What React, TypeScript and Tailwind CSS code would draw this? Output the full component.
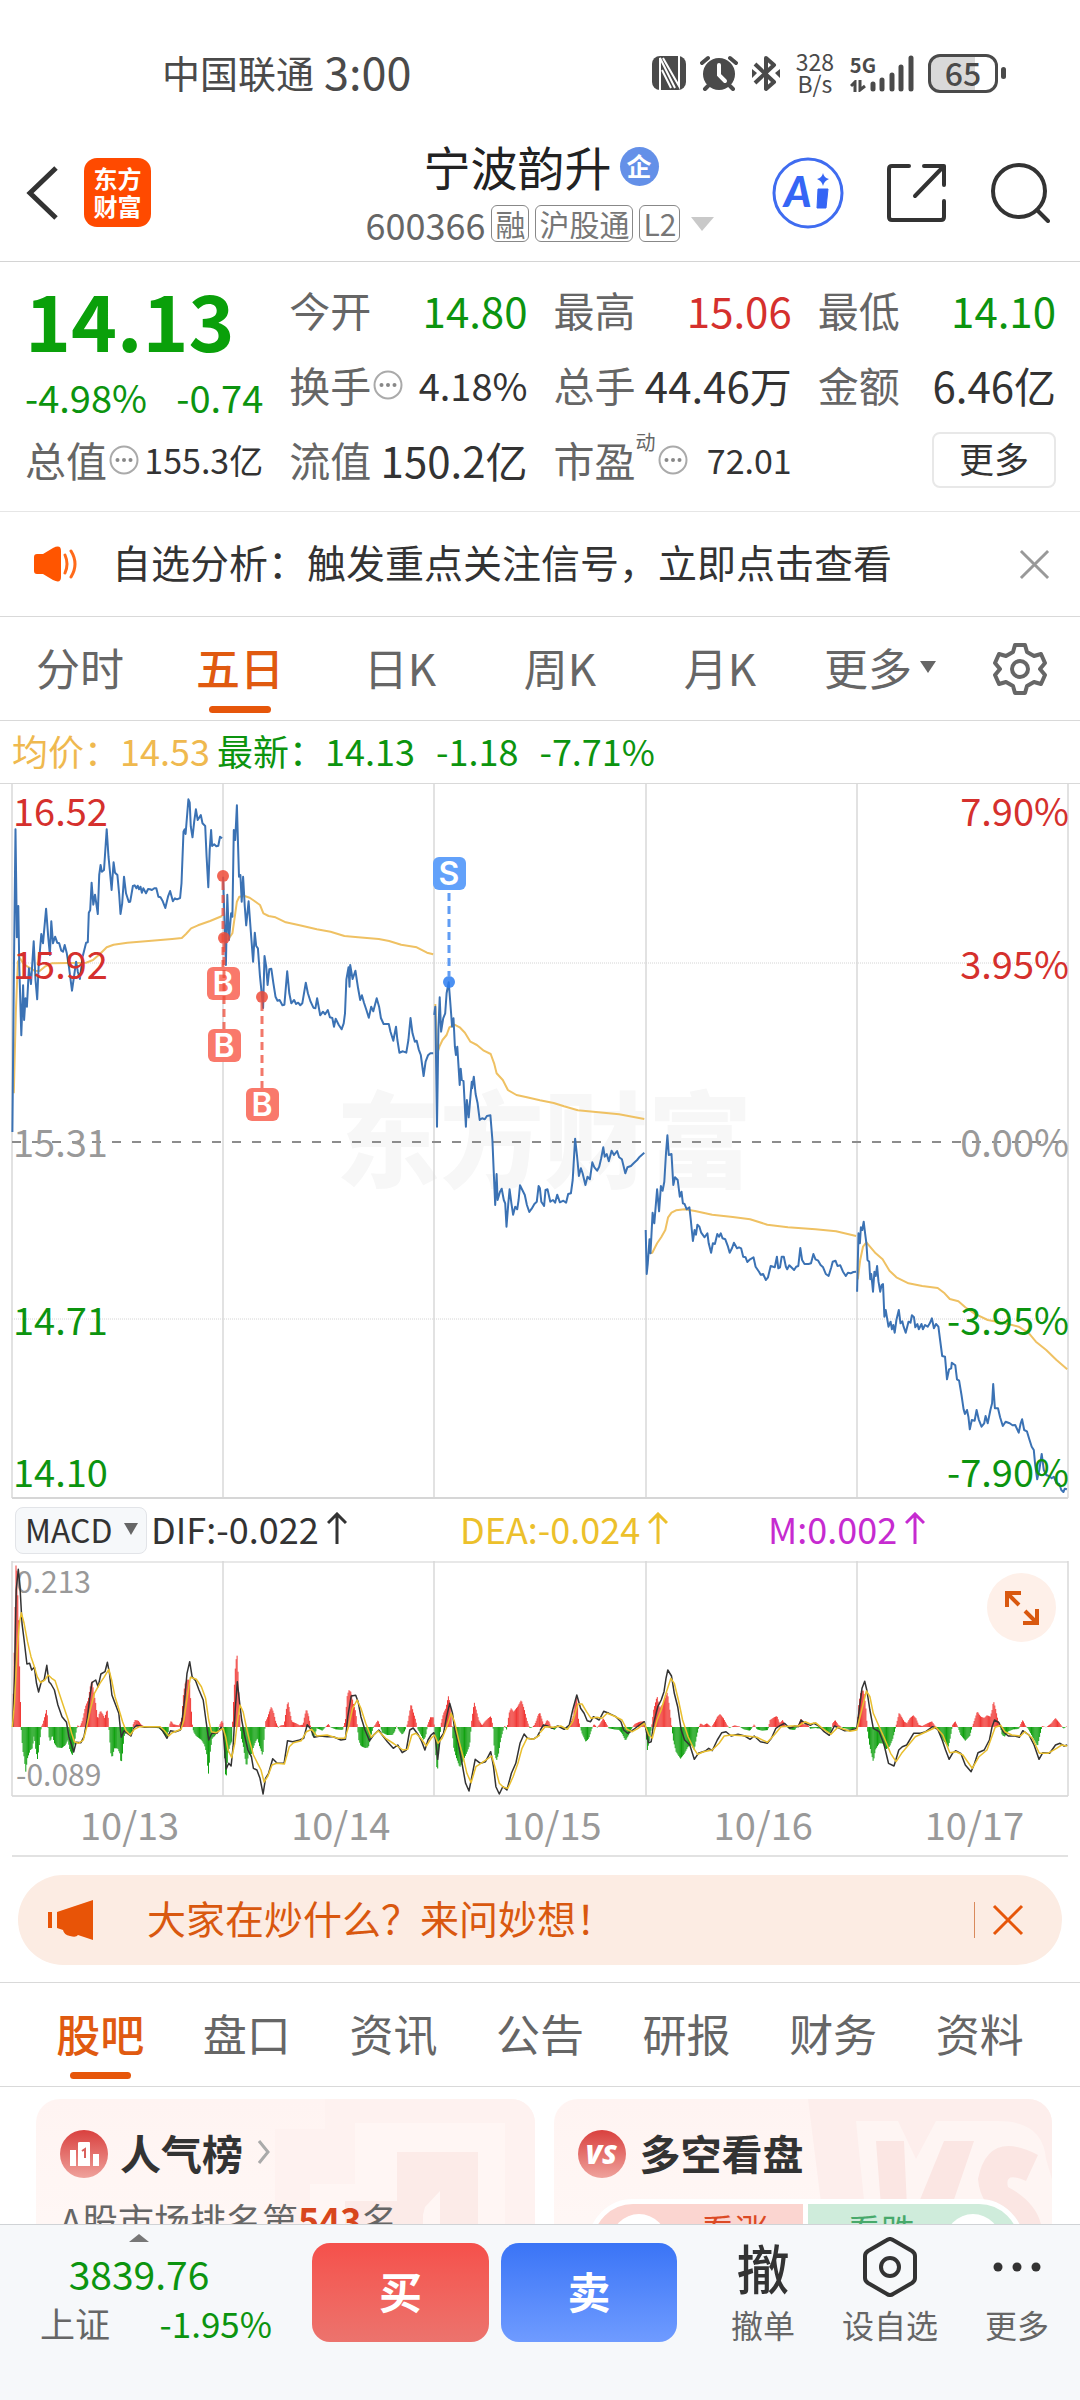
import { useState, type ReactNode } from 'react';

type Tone = 'up' | 'down' | 'flat';

const TONE: Record<Tone, string> = {
  up: 'text-[#d5302d]',
  down: 'text-[#0c940f]',
  flat: 'text-[#333333]',
};

const CHART_TABS = ['分时', '五日', '日K', '周K', '月K'];
const INFO_TABS = ['股吧', '盘口', '资讯', '公告', '研报', '财务', '资料'];
const DATES = ['10/13', '10/14', '10/15', '10/16', '10/17'];

// Series are sampled on a fine grid: flat [x, y, x, y, ...] lists, one per session.
const GX = 2.904;
const GY = 3;

const PRICE_TOP: number[][] = [
  [
    36, 1056, 40, 600, 45, 148, 49, 472, 53, 378, 56, 560, 62, 766, 67, 616, 70, 720, 74, 655, 78, 680, 84, 565, 90, 612, 98, 484,
    103, 600, 108, 658, 112, 560, 120, 462, 125, 490, 134, 386, 140, 470, 145, 525, 149, 424, 154, 490, 160, 470, 166, 488, 172, 490,
    178, 512, 183, 515, 188, 495, 194, 520, 200, 560, 209, 632, 215, 590, 221, 545, 226, 575, 232, 597, 240, 530, 250, 488, 255, 487,
    258, 398, 262, 390, 266, 308, 271, 374, 276, 344, 284, 402, 288, 285, 292, 255, 296, 275, 302, 270, 310, 148, 315, 230, 319, 270,
    324, 330, 330, 247, 334, 278, 341, 285, 346, 340, 350, 402, 355, 370, 360, 290, 366, 340, 374, 366, 378, 365, 386, 318, 391, 316,
    396, 325, 400, 317, 404, 328, 408, 320, 412, 338, 416, 325, 424, 340, 430, 327, 436, 328, 441, 330, 448, 325, 454, 325, 460, 350,
    466, 352, 472, 362, 480, 384, 488, 350, 494, 333, 502, 364, 508, 355, 514, 358, 523, 354, 527, 310, 533, 155, 536, 148, 539, 162,
    547, 58, 551, 68, 554, 140, 559, 172, 564, 125, 569, 88, 574, 120, 583, 105, 588, 130, 596, 138, 600, 230, 605, 322, 609, 210,
    613, 150, 616, 198, 622, 193, 628, 199, 634, 197, 639, 170, 645, 175,
  ],
  [
    648, 290, 652, 420, 656, 555, 660, 344, 665, 480, 671, 400, 675, 410, 679, 150, 683, 180, 688, 76, 691, 180, 694, 290, 698, 285,
    702, 365, 706, 290, 711, 380, 715, 436, 722, 364, 728, 450, 735, 545, 740, 458, 744, 498, 749, 505, 755, 590, 760, 640, 764, 684,
    768, 528, 773, 560, 777, 615, 782, 568, 788, 566, 794, 610, 800, 650, 806, 662, 812, 660, 820, 676, 826, 674, 834, 574, 840, 640,
    846, 670, 854, 660, 860, 672, 866, 668, 872, 676, 878, 670, 888, 608, 894, 640, 902, 665, 910, 683, 916, 685, 921, 655, 930, 706,
    938, 695, 944, 703, 952, 690, 958, 712, 965, 714, 970, 740, 975, 716, 984, 735, 992, 748, 998, 730, 1002, 700, 1006, 598,
    1012, 562, 1015, 620, 1017, 555, 1024, 597, 1032, 572, 1040, 625, 1046, 660, 1051, 646, 1057, 668, 1064, 690, 1071, 713,
    1078, 680, 1084, 694, 1094, 655, 1101, 680, 1106, 714, 1114, 732, 1129, 732, 1134, 755, 1142, 782, 1150, 740, 1154, 780,
    1160, 818, 1170, 814, 1180, 818, 1186, 780, 1192, 714, 1198, 760, 1205, 785, 1210, 782, 1216, 808, 1222, 825, 1230, 888,
    1236, 845, 1243, 826, 1250, 820, 1258, 820,
  ],
  [
    1261, 705, 1264, 680, 1269, 1040, 1273, 750, 1277, 652, 1281, 755, 1287, 715, 1293, 700, 1297, 640, 1303, 607, 1307, 660,
    1313, 740, 1317, 715, 1321, 800, 1324, 825, 1328, 800, 1335, 915, 1338, 866, 1341, 900, 1346, 903, 1353, 1040, 1356, 960,
    1361, 1012, 1367, 940, 1370, 905, 1371, 925, 1376, 890, 1381, 942, 1387, 970, 1393, 1020, 1400, 1015, 1408, 1018, 1414, 1008,
    1424, 1006, 1430, 1080, 1434, 1180, 1438, 1275, 1442, 1182, 1445, 1260, 1452, 1235, 1457, 1226, 1463, 1260, 1467, 1270,
    1471, 1340, 1476, 1270, 1480, 1228, 1485, 1270, 1490, 1304, 1496, 1280, 1502, 1288, 1506, 1260, 1510, 1216, 1518, 1232,
    1524, 1245, 1530, 1275, 1537, 1296, 1544, 1286, 1552, 1272, 1559, 1265, 1564, 1218, 1568, 1225, 1572, 1265, 1580, 1278,
    1584, 1230, 1590, 1228, 1598, 1265, 1606, 1260, 1612, 1268, 1618, 1244, 1626, 1267, 1636, 1262, 1644, 1268, 1650, 1242,
    1658, 1240, 1663, 1200, 1670, 1076, 1676, 1130, 1681, 1188, 1687, 1165, 1692, 1180, 1700, 1215, 1706, 1190, 1713, 1198,
    1720, 1147, 1726, 1162, 1734, 1172, 1740, 1160, 1746, 1135, 1752, 1102, 1756, 1130, 1762, 1122, 1768, 1144, 1776, 1112,
    1783, 1125, 1792, 1113, 1798, 1132, 1806, 1138, 1810, 1155, 1816, 1180, 1822, 1162, 1832, 1158, 1840, 1150, 1850, 1140,
    1858, 1130, 1871, 1118,
  ],
];

const PRICE_LOW: number[][] = [
  [
    307, 300, 310, 432, 313, 400, 318, 328, 321, 370, 327, 248, 332, 280, 340, 178, 346, 244, 351, 168, 356, 182, 361, 155, 366, 70,
    370, 16, 374, 75, 382, 72, 387, 165, 392, 142, 400, 150, 406, 200, 411, 185, 415, 220, 420, 222, 426, 238, 434, 232, 438, 270,
    444, 333, 449, 300, 453, 314, 457, 284, 463, 290, 468, 308, 478, 322, 486, 310, 490, 340, 497, 368, 502, 340, 508, 342, 515, 312,
    520, 320, 525, 310, 530, 325, 538, 328, 546, 350, 551, 368, 558, 354, 563, 338, 572, 355, 578, 352, 584, 355, 590, 380, 597, 382,
    602, 396, 610, 388, 620, 382, 626, 410, 636, 425, 641, 434, 648, 432, 656, 450, 662, 442, 670, 408, 682, 412, 688, 380, 692, 415,
    697, 412, 702, 380, 708, 380, 714, 410, 718, 418, 724, 406, 738, 420, 744, 410, 750, 408, 756, 354, 761, 390, 768, 402, 780, 402,
    787, 400, 794, 372, 800, 388, 808, 392, 815, 405, 822, 412, 830, 432, 838, 438, 846, 412, 850, 395, 858, 392, 864, 408, 872, 406,
    880, 425, 888, 438, 894, 428, 902, 430, 910, 426, 918, 425,
  ],
  [
    921, 485, 925, 310, 929, 340, 932, 292, 936, 300, 940, 275, 944, 310, 948, 340, 951, 390, 956, 395, 959, 448, 962, 432, 967, 485,
    971, 425, 975, 438, 979, 408, 983, 455, 988, 485, 992, 465, 996, 462, 1000, 560, 1004, 540, 1008, 565, 1012, 590, 1018, 575,
    1022, 598, 1026, 585, 1030, 608, 1035, 570, 1042, 540, 1047, 580, 1052, 574, 1056, 590, 1062, 608, 1070, 575, 1076, 578,
    1080, 556, 1086, 562, 1090, 592, 1096, 582, 1100, 598, 1108, 582, 1112, 598, 1118, 585, 1126, 590, 1132, 580, 1138, 565,
    1144, 595, 1150, 582, 1157, 590, 1162, 630, 1168, 678, 1176, 680, 1182, 748, 1188, 718, 1194, 715, 1196, 698, 1206, 706,
    1211, 748, 1217, 752, 1224, 795, 1230, 838, 1234, 852, 1240, 840, 1244, 860, 1248, 898, 1254, 870, 1262, 872, 1268, 840,
    1274, 868, 1282, 890, 1290, 880, 1294, 858, 1300, 880, 1308, 840, 1313, 820, 1316, 762, 1321, 835, 1330, 835, 1336, 862,
    1344, 888, 1352, 875, 1364, 880, 1372, 886, 1380, 885, 1390, 908, 1396, 880, 1400, 868, 1406, 900, 1414, 904, 1420, 925,
    1428, 950, 1434, 960, 1438, 1005, 1444, 1048, 1450, 1020, 1457, 972, 1463, 1020, 1470, 1035, 1478, 1038, 1486, 1045, 1492, 1040,
    1500, 1060, 1508, 1062, 1514, 1080, 1520, 1086, 1524, 1076, 1530, 1078,
  ],
];

const AVG_TOP: number[][] = [
  [
    40, 940, 46, 700, 52, 545, 58, 535, 66, 548, 80, 560, 100, 572, 115, 573, 130, 560, 150, 550, 200, 549, 250, 548, 270, 540,
    290, 522, 310, 502, 330, 494, 370, 488, 440, 482, 500, 477, 528, 474, 540, 462, 555, 445, 575, 436, 610, 423, 645, 408,
  ],
  [
    652, 480, 665, 475, 675, 460, 682, 410, 688, 365, 695, 350, 710, 348, 725, 353, 740, 364, 755, 375, 765, 400, 780, 408, 800, 412,
    830, 427, 870, 436, 920, 448, 960, 455, 1000, 468, 1040, 472, 1100, 477, 1130, 483, 1165, 494, 1210, 502, 1240, 518, 1258, 523,
  ],
  [
    1264, 672, 1270, 820, 1276, 800, 1285, 780, 1297, 765, 1305, 742, 1320, 734, 1335, 742, 1350, 758, 1366, 785, 1385, 795,
    1405, 812, 1425, 822, 1435, 850, 1442, 880, 1460, 900, 1475, 930, 1500, 945, 1530, 952, 1568, 961, 1608, 969, 1638, 979,
    1678, 991, 1738, 997, 1798, 1003, 1871, 1017,
  ],
];

const AVG_LOW: number[][] = [
  [
    318, 370, 326, 368, 340, 340, 352, 322, 364, 300, 372, 262, 382, 248, 395, 241, 420, 238, 450, 243, 500, 254, 560, 261, 610, 268,
    660, 284, 720, 292, 800, 298, 860, 304, 918, 318,
  ],
  [
    923, 448, 930, 390, 938, 350, 948, 337, 960, 352, 975, 370, 995, 388, 1015, 422, 1035, 442, 1070, 460, 1110, 468, 1155, 474,
    1175, 490, 1190, 507, 1215, 514, 1235, 532, 1260, 550, 1300, 570, 1350, 580, 1390, 590, 1420, 610, 1440, 635, 1470, 660,
    1500, 690, 1531, 718,
  ],
];

const HIST_A = [
  36, 711, 38, 640, 42, 450, 46, 230, 48, 213, 51, 300, 54, 380, 57, 540, 60, 660, 62, 720, 66, 780, 70, 800, 75, 845, 80, 805,
  88, 780, 94, 775, 99, 735, 104, 780, 109, 808, 114, 765, 120, 711, 125, 700, 130, 680, 136, 655, 139, 700, 142, 740, 146, 755,
  152, 735, 158, 760, 165, 772, 180, 774, 190, 765, 197, 750, 203, 780, 210, 796, 216, 760, 221, 725, 225, 706, 232, 711, 240, 690,
  248, 650, 256, 630, 262, 590, 267, 572, 272, 605, 278, 640, 284, 690, 288, 672, 292, 662, 300, 675, 304, 684, 311, 657, 315, 690,
  318, 740, 322, 790, 326, 804, 332, 775, 342, 775, 348, 790, 352, 824, 357, 780, 360, 740, 366, 726, 375, 735, 381, 740, 386, 705,
  392, 690, 402, 692, 410, 704, 420, 710, 440, 712, 462, 715, 470, 722, 480, 738, 486, 740, 492, 705, 497, 692, 503, 703, 520, 706,
  527, 690, 532, 620, 537, 582, 544, 568, 550, 570, 555, 650, 559, 710, 562, 725, 570, 738, 585, 750, 594, 765, 600, 790, 605, 856,
  611, 780, 616, 745, 624, 738, 632, 725, 638, 705, 644, 692, 648, 700, 650, 750, 654, 850, 657, 862, 662, 790, 668, 765, 673, 755,
  678, 640, 683, 540, 688, 486, 692, 560, 697, 690, 700, 740, 706, 765, 711, 800, 716, 832, 722, 790, 728, 800, 735, 775, 742, 755,
  748, 745, 754, 770, 758, 780, 763, 800, 768, 730, 771, 695, 776, 685, 782, 665, 788, 650, 795, 668, 801, 695, 808, 713, 815, 706,
  825, 705, 831, 660, 836, 633, 842, 665, 848, 695, 860, 700, 870, 706, 880, 704, 885, 675, 890, 657, 897, 680, 902, 708, 906, 735,
  912, 742, 920, 715, 928, 718, 936, 722, 944, 712, 954, 702, 960, 712, 975, 718, 995, 720, 1003, 690, 1008, 620, 1013, 600,
  1020, 606, 1026, 640, 1033, 665, 1038, 712, 1042, 750, 1048, 768, 1060, 774, 1070, 772, 1076, 745, 1083, 715, 1092, 700,
  1098, 690, 1104, 708, 1110, 728, 1125, 735, 1140, 735, 1146, 725, 1152, 708, 1158, 720, 1168, 734, 1176, 722, 1184, 700,
  1189, 670, 1194, 640, 1200, 665, 1207, 690, 1212, 715, 1220, 730, 1230, 750, 1236, 740, 1242, 705, 1250, 682, 1258, 682,
  1262, 715, 1266, 800, 1270, 852, 1275, 770, 1281, 700, 1288, 670, 1295, 655, 1302, 618, 1307, 640, 1312, 700, 1317, 770,
  1324, 800, 1335, 832, 1344, 815, 1355, 790, 1364, 765, 1370, 690, 1377, 636, 1383, 660, 1390, 690, 1400, 706, 1408, 695,
  1418, 685, 1426, 678, 1432, 712, 1436, 790, 1442, 812, 1448, 790, 1454, 750, 1460, 725, 1465, 706, 1472, 720, 1478, 670,
  1484, 655, 1492, 665, 1503, 650, 1514, 630, 1522, 655, 1530, 690, 1538, 714, 1545, 712, 1552, 705, 1558, 690, 1564, 672,
  1568, 670,
];

const HIST_B = [
  0, 670, 5, 685, 12, 708, 20, 690, 26, 695, 34, 714, 42, 720, 52, 708, 60, 714, 76, 718, 86, 705, 96, 680, 102, 640, 108, 620,
  112, 690, 117, 712, 122, 730, 133, 755, 142, 745, 150, 718, 157, 702, 166, 713, 175, 700, 184, 685, 192, 700, 200, 715, 215, 718,
  230, 720, 238, 730, 248, 752, 258, 735, 266, 716, 275, 702, 290, 695, 303, 694, 307, 720, 312, 780, 318, 750, 324, 712, 330, 660,
  340, 618, 347, 655, 358, 640, 370, 606, 376, 650, 382, 705, 387, 750, 395, 785, 408, 806, 420, 790, 430, 770, 440, 765, 448, 780,
  455, 740, 461, 712, 466, 700, 475, 706, 485, 700, 498, 712, 508, 695, 515, 680, 523, 672, 533, 685, 543, 705, 550, 714, 565, 706,
  580, 710, 592, 718, 610, 722, 622, 703, 630, 718, 645, 722, 662, 720, 668, 690, 680, 682, 688, 678, 696, 700, 705, 690, 712, 706,
  725, 718, 740, 720, 752, 700, 758, 685, 765, 704, 775, 700, 785, 716, 800, 714, 815, 716, 830, 722, 843, 732, 850, 700, 857, 690,
  866, 704, 878, 713, 890, 716, 905, 720, 915, 714, 921, 708, 926, 640, 932, 602, 940, 602, 946, 650, 951, 720, 956, 760, 962, 790,
  968, 816, 974, 780, 985, 760, 995, 760, 1005, 778, 1015, 770, 1024, 748, 1033, 712, 1038, 690, 1043, 668, 1050, 680, 1058, 695,
  1066, 700, 1074, 685, 1084, 676, 1092, 685, 1100, 705, 1110, 708, 1125, 700, 1138, 694, 1146, 706, 1154, 716, 1162, 735,
  1174, 755, 1186, 770, 1192, 740, 1198, 705, 1206, 694, 1214, 712, 1222, 735, 1235, 752, 1248, 738, 1255, 712, 1262, 690,
  1270, 664, 1280, 680, 1290, 684, 1298, 676, 1308, 680, 1313, 660, 1317, 632, 1323, 655, 1330, 690, 1336, 705, 1342, 735,
  1350, 740, 1358, 725, 1375, 718, 1390, 717, 1397, 700, 1402, 690, 1410, 708, 1418, 716, 1430, 740, 1445, 768, 1452, 735,
  1458, 708, 1470, 712, 1485, 700, 1497, 684, 1508, 698, 1520, 716, 1531, 708,
];

const DIF_A = [
  37, 711, 42, 560, 47, 300, 53, 238, 58, 290, 64, 400, 70, 450, 78, 522, 86, 520, 92, 540, 97, 535, 100, 532, 106, 580, 112, 606,
  120, 575, 128, 570, 136, 526, 142, 575, 148, 582, 158, 600, 168, 645, 180, 680, 193, 697, 200, 740, 208, 765, 214, 786, 221, 757,
  235, 758, 244, 740, 253, 690, 260, 630, 267, 578, 278, 570, 285, 590, 293, 552, 305, 545, 312, 517, 318, 550, 325, 615, 334, 640,
  345, 670, 352, 742, 360, 722, 370, 730, 380, 738, 388, 715, 397, 706, 420, 712, 450, 710, 462, 712, 472, 722, 485, 745, 495, 722,
  510, 725, 524, 720, 530, 680, 537, 620, 543, 550, 551, 515, 558, 560, 568, 572, 578, 600, 590, 630, 598, 690, 606, 750, 615, 730,
  630, 730, 642, 712, 648, 720, 653, 790, 657, 837, 664, 820, 671, 828, 677, 770, 683, 660, 689, 575, 696, 640, 702, 690, 710, 735,
  720, 780, 730, 800, 736, 835, 746, 840, 755, 865, 764, 912, 771, 865, 780, 850, 792, 806, 805, 820, 825, 820, 835, 752, 850, 755,
  870, 750, 882, 745, 892, 704, 903, 718, 912, 742, 930, 738, 950, 740, 968, 740, 990, 750, 1003, 748, 1010, 680, 1020, 618,
  1033, 616, 1040, 635, 1048, 680, 1060, 720, 1073, 752, 1085, 735, 1100, 720, 1110, 735, 1125, 755, 1142, 775, 1155, 765,
  1168, 788, 1180, 780, 1190, 720, 1200, 714, 1215, 735, 1225, 755, 1234, 780, 1243, 750, 1252, 735, 1260, 728, 1265, 750,
  1271, 808, 1278, 745, 1288, 730, 1297, 680, 1306, 640, 1314, 670, 1320, 715, 1330, 755, 1340, 810, 1352, 880, 1362, 903,
  1372, 850, 1380, 808, 1395, 820, 1410, 815, 1425, 785, 1433, 830, 1440, 890, 1450, 912, 1460, 890, 1472, 900, 1485, 850,
  1498, 820, 1510, 760, 1522, 732, 1532, 745, 1548, 748, 1560, 740, 1568, 725,
];

const DIF_B = [
  0, 722, 10, 705, 22, 708, 35, 715, 52, 708, 70, 718, 85, 705, 95, 660, 107, 615, 118, 655, 128, 670, 137, 692, 147, 695, 155, 680,
  172, 690, 185, 664, 200, 670, 220, 680, 235, 695, 243, 720, 255, 730, 270, 720, 285, 708, 303, 695, 308, 720, 315, 758, 323, 755,
  330, 700, 342, 650, 352, 630, 360, 605, 366, 565, 371, 540, 382, 558, 390, 610, 400, 650, 410, 720, 420, 750, 435, 765, 448, 808,
  460, 790, 480, 783, 490, 775, 500, 782, 515, 750, 528, 728, 540, 725, 555, 738, 575, 733, 595, 738, 610, 748, 622, 738, 640, 755,
  660, 760, 672, 745, 685, 715, 695, 708, 710, 700, 725, 715, 740, 708, 750, 710, 758, 690, 770, 700, 785, 706, 795, 700, 810, 708,
  825, 725, 840, 736, 855, 708, 870, 715, 885, 722, 905, 720, 920, 715, 928, 650, 935, 595, 943, 574, 949, 600, 958, 660, 968, 715,
  985, 725, 998, 760, 1012, 820, 1028, 828, 1042, 780, 1052, 770, 1065, 765, 1085, 730, 1105, 730, 1120, 725, 1140, 710, 1155, 718,
  1168, 750, 1178, 780, 1188, 808, 1198, 790, 1207, 782, 1222, 790, 1235, 825, 1252, 845, 1262, 820, 1272, 788, 1290, 780,
  1305, 750, 1313, 710, 1320, 690, 1333, 698, 1345, 725, 1360, 738, 1380, 738, 1392, 742, 1402, 722, 1420, 735, 1435, 765,
  1449, 808, 1460, 788, 1480, 790, 1497, 765, 1510, 760, 1522, 768, 1531, 765,
];

const DEA_A = [
  36, 711, 42, 640, 50, 480, 56, 400, 62, 368, 70, 400, 80, 455, 90, 500, 100, 530, 108, 560, 118, 578, 130, 570, 140, 555, 150, 565,
  160, 572, 172, 610, 185, 650, 198, 690, 208, 730, 216, 755, 228, 760, 242, 750, 252, 710, 262, 660, 274, 610, 290, 580, 302, 562,
  316, 538, 324, 570, 334, 620, 346, 660, 356, 695, 366, 722, 378, 735, 390, 718, 405, 710, 450, 710, 465, 710, 478, 722, 490, 738,
  500, 728, 526, 718, 534, 690, 544, 620, 553, 562, 570, 568, 585, 590, 597, 625, 606, 690, 614, 725, 628, 728, 648, 715, 655, 740,
  662, 780, 673, 803, 682, 760, 690, 690, 697, 645, 706, 665, 714, 705, 724, 750, 736, 795, 748, 820, 758, 840, 767, 876, 778, 858,
  790, 825, 803, 820, 826, 822, 840, 770, 852, 758, 875, 752, 890, 725, 905, 718, 920, 738, 950, 735, 980, 745, 1002, 745,
  1012, 710, 1024, 655, 1037, 630, 1048, 655, 1062, 700, 1078, 742, 1098, 722, 1120, 745, 1145, 762, 1170, 780, 1184, 778,
  1196, 735, 1208, 730, 1222, 745, 1238, 768, 1252, 745, 1262, 735, 1272, 760, 1284, 745, 1296, 715, 1310, 670, 1320, 695,
  1332, 750, 1346, 805, 1356, 850, 1368, 878, 1382, 830, 1400, 818, 1428, 798, 1440, 840, 1450, 880, 1462, 892, 1475, 895,
  1490, 860, 1504, 820, 1516, 775, 1530, 745, 1548, 748, 1568, 735,
];

const DEA_B = [
  0, 728, 15, 710, 40, 712, 60, 708, 80, 718, 95, 695, 110, 642, 122, 642, 135, 665, 148, 685, 165, 682, 180, 685, 195, 670, 215, 678,
  238, 690, 252, 718, 268, 725, 285, 715, 303, 700, 316, 735, 326, 745, 340, 690, 352, 660, 366, 610, 380, 565, 390, 580, 402, 630,
  414, 690, 430, 740, 446, 775, 458, 793, 475, 785, 500, 780, 520, 760, 535, 738, 555, 735, 600, 738, 630, 742, 660, 757, 680, 735,
  700, 710, 730, 708, 750, 708, 770, 695, 785, 702, 800, 698, 820, 715, 845, 733, 865, 712, 900, 724, 920, 720, 932, 670, 948, 603,
  958, 620, 968, 670, 985, 710, 1000, 745, 1018, 790, 1034, 815, 1050, 790, 1070, 765, 1090, 740, 1115, 728, 1150, 712, 1170, 735,
  1190, 788, 1208, 785, 1228, 795, 1255, 835, 1275, 800, 1298, 780, 1312, 740, 1322, 712, 1338, 706, 1350, 725, 1370, 735,
  1395, 738, 1408, 725, 1430, 745, 1450, 790, 1475, 790, 1500, 775, 1515, 765, 1531, 768,
];

const ZERO = 711;

function toPath(pts: number[], ox: number, oy: number) {
  let d = '';
  for (let i = 0; i < pts.length; i += 2) {
    d += `${i ? 'L' : 'M'}${(pts[i] / GX + ox).toFixed(1)} ${(pts[i + 1] / GY + oy).toFixed(1)}`;
  }
  return d;
}

/** One thin vertical bar per minute, interpolated between the samples. */
function toBars(pts: number[], ox: number, oy: number, rising: boolean) {
  let d = '';
  let i = 0;
  for (let x = pts[0]; x <= pts[pts.length - 2]; x += 2.6) {
    while (i < pts.length - 4 && pts[i + 2] < x) i += 2;
    const t = (x - pts[i]) / (pts[i + 2] - pts[i] || 1);
    const y = pts[i + 1] + (pts[i + 3] - pts[i + 1]) * t;
    if (rising === y < ZERO) {
      d += `M${(x / GX + ox).toFixed(1)} ${ZERO / GY + oy}V${(y / GY + oy).toFixed(1)}`;
    }
  }
  return d;
}

const GRID_X = [12, 223, 434, 646, 857, 1068];

function PriceChart() {
  const labels: [number, string, string, string][] = [
    [42, '16.52', '7.90%', '#d5302d'],
    [195, '15.92', '3.95%', '#d5302d'],
    [373, '15.31', '0.00%', '#999999'],
    [551, '14.71', '-3.95%', '#0c940f'],
    [703, '14.10', '-7.90%', '#0c940f'],
  ];
  return (
    <svg viewBox="0 0 1080 715" className="block h-auto w-full" role="img" aria-label="五日走势图">
      <text x="336" y="396" fontSize="104" fontWeight="900" fill="#f7f7f7">
        东方财富
      </text>
      {GRID_X.map((x) => (
        <path key={x} d={`M${x} 0V714`} stroke="#d9d9d9" strokeWidth="1.5" />
      ))}
      <path d="M12 179H1068M12 535H1068" stroke="#d4d4d4" strokeDasharray="1 1" />
      <path d="M12 714H1068" stroke="#d6d6d6" strokeWidth="2" />
      <path d="M12 358H1068" stroke="#8c8c8c" strokeWidth="2" strokeDasharray="9 11" />
      <g fill="none" stroke="#efc163" strokeWidth="2" strokeLinejoin="round">
        {AVG_TOP.map((s, i) => (
          <path key={i} d={toPath(s, 0, -4)} />
        ))}
        {AVG_LOW.map((s, i) => (
          <path key={i} d={toPath(s, 540, 346)} />
        ))}
      </g>
      <g fill="none" stroke="#3b72b4" strokeWidth="2" strokeLinejoin="round">
        {PRICE_TOP.map((s, i) => (
          <path key={i} d={toPath(s, 0, -4)} />
        ))}
        {PRICE_LOW.map((s, i) => (
          <path key={i} d={toPath(s, 540, 346)} />
        ))}
      </g>
      {labels.map(([y, price, pct, color]) => (
        <g key={price} fontSize="38" fill={color}>
          <text x="13" y={y}>
            {price}
          </text>
          <text x="1069" y={y} textAnchor="end">
            {pct}
          </text>
        </g>
      ))}
      <TradeMark x={223} dot={92} box={183} kind="B" />
      <TradeMark x={224} dot={154} box={245} kind="B" />
      <TradeMark x={262} dot={213} box={304} kind="B" />
      <TradeMark x={449} dot={198} box={73} kind="S" />
    </svg>
  );
}

function TradeMark({ x, dot, box, kind }: { x: number; dot: number; box: number; kind: 'B' | 'S' }) {
  const fill = kind === 'B' ? '#f9796b' : '#62a1fa';
  const strong = kind === 'B' ? '#ee4b38' : '#2b7cf0';
  const from = kind === 'B' ? dot + 6 : box + 36;
  const to = kind === 'B' ? box : dot - 6;
  return (
    <g>
      <path d={`M${x} ${from}V${to}`} stroke={strong} strokeOpacity="0.75" strokeWidth="3" strokeDasharray="8 5" />
      <circle cx={x} cy={dot} r="6" fill={strong} fillOpacity="0.85" />
      <rect x={x - 16} y={box} width="33" height="33" rx="6" fill={fill} />
      <text x={x} y={box + 28} fontSize="32" fontWeight="600" fill="#ffffff" textAnchor="middle" fontFamily="Inter, sans-serif">
        {kind}
      </text>
    </g>
  );
}

function MacdChart() {
  return (
    <svg viewBox="0 0 1080 236" className="block h-auto w-full" role="img" aria-label="MACD">
      <path d="M12 1H1068" stroke="#e0e0e0" strokeWidth="1.5" />
      <path d="M12 235H1068" stroke="#dedede" strokeWidth="2" />
      {GRID_X.map((x) => (
        <path key={x} d={`M${x} 0V235`} stroke="#d9d9d9" strokeWidth="1.5" />
      ))}
      <g stroke="#f03a37" strokeWidth="1">
        <path d={toBars(HIST_A, 0, -71, true)} />
        <path d={toBars(HIST_B, 540, -71, true)} />
      </g>
      <g stroke="#12a112" strokeWidth="1">
        <path d={toBars(HIST_A, 0, -71, false)} />
        <path d={toBars(HIST_B, 540, -71, false)} />
      </g>
      <g fontSize="30" fill="#999999">
        <text x="16" y="32">
          0.213
        </text>
        <text x="16" y="225">
          -0.089
        </text>
      </g>
      <g fill="none" strokeWidth="1.5" strokeLinejoin="round">
        <path d={toPath(DIF_A, 0, -71)} stroke="#333333" />
        <path d={toPath(DIF_B, 540, -71)} stroke="#333333" />
        <path d={toPath(DEA_A, 0, -71)} stroke="#e9bf2f" />
        <path d={toPath(DEA_B, 540, -71)} stroke="#e9bf2f" />
      </g>
    </svg>
  );
}

function StatusBar() {
  return (
    <div className="flex h-[124px] items-center justify-between pt-[22px] pr-[74px] pl-[162px] text-[#4a4a4a]">
      <div className="flex items-center gap-[10px] pb-1">
        <span className="text-[38px]">中国联通</span>
        <span className="text-[45px]">3:00</span>
      </div>
      <div className="flex items-center gap-[14px]">
        <svg width="34" height="36" viewBox="0 0 34 36" aria-hidden>
          <rect y="1" width="34" height="34" rx="8" fill="#4a4a4a" />
          <path d="M8 35V3L23 33M11 3L27 31V1M10 15L19 33" fill="none" stroke="#ffffff" strokeWidth="2" />
        </svg>
        <svg width="38" height="36" viewBox="0 0 38 36" aria-hidden>
          <circle cx="19" cy="19" r="16" fill="#4a4a4a" />
          <path d="M2 8L8 3M36 8L30 3M8 31L5 34M30 31L33 34" stroke="#4a4a4a" strokeWidth="4" strokeLinecap="round" />
          <path d="M19 10V20L25 26" fill="none" stroke="#ffffff" strokeWidth="4" strokeLinecap="round" />
        </svg>
        <svg width="28" height="37" viewBox="0 0 28 37" fill="none" stroke="#4a4a4a" strokeWidth="4" aria-hidden>
          <path d="M3 9L22 27L14 34V3L22 10L3 28" strokeLinejoin="round" />
          <path d="M0 14V23L5 18ZM28 14V23L23 18Z" fill="#4a4a4a" stroke="none" />
        </svg>
        <span className="w-[42px] pb-[2px] text-center text-[23px] leading-[22px]">
          328
          <br />
          B/s
        </span>
        <div className="flex h-[37px] items-end gap-[2px]">
          <div className="flex h-full flex-col items-start justify-between">
            <span className="text-[20px] leading-[20px] font-bold">5G</span>
            <svg width="16" height="12" viewBox="0 0 16 12" fill="none" stroke="#4a4a4a" strokeWidth="3" aria-hidden>
              <path d="M5 12V2L1 6M10 0V10L15 6" />
            </svg>
          </div>
          <svg width="44" height="37" viewBox="0 0 44 37" className="-ml-[8px]" aria-hidden>
            <path d="M3 34V29M12 34V25M22 34V20M31 34V12M41 34V3" stroke="#4a4a4a" strokeWidth="5" strokeLinecap="round" />
          </svg>
        </div>
        <div className="flex items-center gap-[3px]">
          <span className="flex h-[39px] w-[70px] items-center justify-center rounded-[12px] border-[3px] border-[#4a4a4a] bg-[linear-gradient(90deg,#d9d9d9_68%,#ffffff_68%)] pb-[2px] text-[32px] leading-none font-medium">
            65
          </span>
          <span className="h-[12px] w-[5px] rounded-full bg-[#4a4a4a]" />
        </div>
      </div>
    </div>
  );
}

function Header() {
  return (
    <header className="flex h-[138px] items-center justify-between border-b border-[#d4d4d4] pr-[30px] pl-[26px]">
      <div className="flex w-[284px] items-center gap-[25px]">
        <button type="button" aria-label="返回">
          <svg width="33" height="56" viewBox="0 0 33 56" fill="none" stroke="#333333" strokeWidth="5" aria-hidden>
            <path d="M30 3L4 28L30 53" />
          </svg>
        </button>
        <span className="grid h-[69px] w-[67px] place-content-center rounded-[13px] bg-[#ff4a00] pb-[2px] text-[24px] leading-[28px] font-bold text-white">
          <span>东方</span>
          <span>财富</span>
        </span>
      </div>
      <div className="flex flex-col items-center">
        <h1 className="flex items-center gap-2 text-[47px] leading-[46px] text-[#222222]">
          宁波韵升
          <span className="flex h-[39px] w-[39px] items-center justify-center rounded-full bg-[#6490e8] pb-[2px] text-[25px] leading-none font-bold text-white">
            企
          </span>
        </h1>
        <div className="mt-4 flex items-center gap-[6px] text-[#666666]">
          <span className="text-[36px] leading-[36px]">600366</span>
          <Tag>融</Tag>
          <Tag>沪股通</Tag>
          <Tag>L2</Tag>
          <svg width="30" height="14" viewBox="0 0 30 14" aria-hidden>
            <path d="M5 0H28L16 14Z" fill="#c9c9c9" />
          </svg>
        </div>
      </div>
      <div className="flex w-[278px] items-center justify-between">
        <button type="button" aria-label="Ai">
          <svg width="72" height="74" viewBox="0 0 72 74" aria-hidden>
            <circle cx="36" cy="37" r="34" fill="none" stroke="#3f6cf0" strokeWidth="3" />
            <text x="12" y="51" fontSize="42" fontWeight="900" fontStyle="italic" fill="#3565f5" fontFamily="Lato, sans-serif">
              A
            </text>
            <path d="M46 33H56L54 52H45Z" fill="#3565f5" stroke="#3565f5" strokeLinejoin="round" />
            <path d="M51 17Q52 22 57 23Q52 25 51 30Q50 25 45 23Q50 22 51 17Z" fill="#3565f5" />
          </svg>
        </button>
        <button type="button" aria-label="分享">
          <svg width="60" height="60" viewBox="0 0 60 60" fill="none" stroke="#333333" strokeWidth="4" strokeLinecap="round" strokeLinejoin="round" aria-hidden>
            <path d="M22 3H5Q2 3 2 6V54Q2 57 5 57H54Q57 57 57 54V38" />
            <path d="M37 3H57V22M57 3L28 33" />
          </svg>
        </button>
        <button type="button" aria-label="搜索">
          <svg width="60" height="60" viewBox="0 0 60 60" fill="none" stroke="#333333" strokeWidth="4" strokeLinecap="round" aria-hidden>
            <circle cx="29" cy="28" r="26" />
            <path d="M47 47L58 58" />
          </svg>
        </button>
      </div>
    </header>
  );
}

function Tag({ children }: { children: ReactNode }) {
  return (
    <span className="flex h-[37px] items-center rounded-[6px] border border-[#888888] px-[3px] pb-[2px] text-[30px] leading-none text-[#777777]">
      {children}
    </span>
  );
}

function InfoDot() {
  return (
    <svg width="30" height="30" viewBox="0 0 30 30" className="mx-[2px] shrink-0" aria-hidden>
      <circle cx="15" cy="15" r="13.500" fill="none" stroke="#aaaaaa" strokeWidth="2" />
      <g fill="#888888">
        <circle cx="8.500" cy="15" r="2" />
        <circle cx="15" cy="15" r="2" />
        <circle cx="21.500" cy="15" r="2" />
      </g>
    </svg>
  );
}

type StatSize = 'lg' | 'md' | 'sm';

const STAT_SIZE: Record<StatSize, string> = {
  lg: 'text-[42px]',
  md: 'text-[38px]',
  sm: 'text-[34px]',
};

function Stat({ label, info, sup, value, tone = 'flat', size = 'lg' }: { label: string; info?: boolean; sup?: string; value: string; tone?: Tone; size?: StatSize }) {
  return (
    <div className="flex h-[75px] items-center justify-between whitespace-nowrap">
      <span className="flex items-center text-[41px] text-[#666666]">
        {label}
        {sup && <sup className="-mt-4 text-[20px]">{sup}</sup>}
        {info && <InfoDot />}
      </span>
      <span className={`${TONE[tone]} ${STAT_SIZE[size]}`}>{value}</span>
    </div>
  );
}

function Quote() {
  return (
    <section className="grid grid-cols-4 gap-x-[26px] border-b border-[#e6e6e6] pt-[10px] pr-[24px] pb-[14px] pl-[25px]">
      <div className="row-span-2 pt-2 whitespace-nowrap text-[#0aa00a]">
        <div className="text-[78px] leading-[76px] font-bold">14.13</div>
        <div className="mt-4 flex justify-between text-[38px] leading-[50px] text-[#0c940f]">
          <span>-4.98%</span>
          <span>-0.74</span>
        </div>
      </div>
      <Stat label="今开" value="14.80" tone="down" />
      <Stat label="最高" value="15.06" tone="up" />
      <Stat label="最低" value="14.10" tone="down" />
      <Stat label="换手" info value="4.18%" size="md" />
      <Stat label="总手" value="44.46万" />
      <Stat label="金额" value="6.46亿" />
      <Stat label="总值" info value="155.3亿" size="sm" />
      <Stat label="流值" value="150.2亿" />
      <Stat label="市盈" sup="动" info value="72.01" size="sm" />
      <div className="flex items-center justify-end">
        <button type="button" className="h-[56px] w-[124px] rounded-[8px] border-2 border-[#e8e8e8] pb-1 text-[35px] leading-none text-[#333333]">
          更多
        </button>
      </div>
    </section>
  );
}

function Cross({ size, color }: { size: number; color: string }) {
  return (
    <svg width={size} height={size} viewBox="0 0 32 32" fill="none" stroke={color} strokeWidth="3" aria-hidden>
      <path d="M2 2L30 30M30 2L2 30" />
    </svg>
  );
}

function Notice() {
  return (
    <div className="flex h-[105px] items-center border-b border-[#d9d9d9] pr-[30px] pl-[34px]">
      <svg width="46" height="38" viewBox="0 0 46 38" aria-hidden>
        <path d="M3 9H9L19 3Q27 -1 27 6V32Q27 39 19 35L9 29H3Q0 29 0 26V12Q0 9 3 9Z" fill="#ff5500" />
        <path d="M31 10Q35 19 31 28M37 6Q45 19 37 32" fill="none" stroke="#ff6a1a" strokeWidth="3" strokeLinecap="round" />
      </svg>
      <a href="#analysis" className="ml-[32px] flex-1 pb-[5px] text-[39px] text-[#333333]">
        自选分析：触发重点关注信号，立即点击查看
      </a>
      <button type="button" aria-label="关闭提示">
        <Cross size={31} color="#999999" />
      </button>
    </div>
  );
}

function ChartTabs() {
  const [active, setActive] = useState('五日');
  return (
    <nav className="grid h-[104px] grid-cols-[repeat(6,160fr)_120fr] border-b border-[#d9d9d9] text-[44px] text-[#666666]">
      {CHART_TABS.map((t) => (
        <button
          key={t}
          type="button"
          onClick={() => setActive(t)}
          className={`relative pb-1 ${t === active ? 'font-medium text-[#e05a10]' : ''}`}
        >
          {t}
          {t === active && <span className="absolute inset-x-[49px] bottom-[7px] h-[7px] rounded-full bg-[#e6560a]" />}
        </button>
      ))}
      <button type="button" className="flex items-center justify-center gap-[8px] pb-1">
        更多
        <svg width="16" height="12" viewBox="0 0 16 12" aria-hidden>
          <path d="M0 0H16L8 12Z" fill="#666666" />
        </svg>
      </button>
      <button type="button" aria-label="设置" className="flex items-center justify-center">
        <svg width="54" height="54" viewBox="0 0 54 54" fill="none" stroke="#666666" strokeWidth="4" strokeLinejoin="round" aria-hidden>
          <path d="M22 3H32L34 10L41 14L48 12L52 21L47 27L52 33L48 42L41 40L34 44L32 51H22L20 44L13 40L6 42L2 33L7 27L2 21L6 12L13 14L20 10Z" />
          <circle cx="27" cy="27" r="8" />
        </svg>
      </button>
    </nav>
  );
}

function MacdBar() {
  return (
    <div className="flex h-[62px] items-center pl-[15px] text-[36px] leading-none">
      <button type="button" className="flex h-[47px] w-[132px] items-center justify-between rounded-[8px] border border-[#e2e4e8] bg-[#f6f8fa] pr-[8px] pb-[3px] pl-[9px] text-[32px] text-[#333333]">
        MACD
        <svg width="14" height="12" viewBox="0 0 14 12" aria-hidden>
          <path d="M0 0H14L7 12Z" fill="#666666" />
        </svg>
      </button>
      <span className="ml-1 flex w-[309px] items-center gap-2 pb-1 text-[#333333]">
        DIF:-0.022
        <ArrowUp />
      </span>
      <span className="flex w-[308px] items-center gap-2 pb-1 text-[#ecc02b]">
        DEA:-0.024
        <ArrowUp />
      </span>
      <span className="flex items-center gap-2 pb-1 text-[#c62bd0]">
        M:0.002
        <ArrowUp />
      </span>
    </div>
  );
}

function ArrowUp() {
  return (
    <svg width="20" height="32" viewBox="0 0 20 32" fill="none" stroke="currentColor" strokeWidth="3" aria-hidden>
      <path d="M10 32V2M1 11L10 2L19 11" />
    </svg>
  );
}

function AskBanner() {
  return (
    <div className="mx-[18px] mt-[18px] mb-[17px] flex h-[90px] items-center rounded-full bg-[#fcece3] pr-[38px] pl-[30px]">
      <svg width="46" height="40" viewBox="0 0 46 40" fill="#e85407" aria-hidden>
        <path d="M0 12H4V28H0ZM9 12L45 0V40L30 35Q28 38 22 36Q16 35 15 30L9 28Z" />
      </svg>
      <a href="#ask" className="ml-[53px] flex-1 pb-[6px] text-[39px] text-[#d9580f]">
        大家在炒什么？来问妙想！
      </a>
      <span className="mr-[17px] h-[36px] w-px bg-[#d98a5c]" />
      <button type="button" aria-label="关闭">
        <Cross size={32} color="#e6560a" />
      </button>
    </div>
  );
}

function InfoTabs() {
  const [active, setActive] = useState('股吧');
  return (
    <nav className="grid h-[105px] shrink-0 grid-cols-7 border-y border-[#d9d9d9] px-[27px] text-[44px] text-[#666666]">
      {INFO_TABS.map((t) => (
        <button key={t} type="button" onClick={() => setActive(t)} className={`relative pb-1 ${t === active ? 'font-medium text-[#e05a10]' : ''}`}>
          {t}
          {t === active && <span className="absolute inset-x-[43px] bottom-[7px] h-[7px] rounded-full bg-[#e6560a]" />}
        </button>
      ))}
    </nav>
  );
}

function CardRow() {
  return (
    <div className="grid grid-cols-2 gap-[19px] pt-3 pr-[28px] pl-[36px]">
      <section className="relative h-[240px] overflow-hidden rounded-[24px] bg-gradient-to-b from-[#fff4f2] to-[#fffaf8] px-6 pt-[28px]">
        <svg viewBox="0 0 260 240" className="absolute top-0 right-0 h-[240px] w-[260px]" aria-hidden>
          <path d="M0 30H50V0H260V240H0Z" fill="#fef2f0" />
          <path d="M35 85H80V24H230V240H35Z" fill="#fff6f4" />
          <path d="M70 240V102H122V53H203V240Z" fill="#fcebe8" />
          <path d="M150 108L165 92V240H148V116Z" fill="#fff6f4" />
        </svg>
        <h2 className="relative flex items-center gap-[12px] text-[41px] leading-[50px] font-bold text-[#333333]">
          <svg width="48" height="48" viewBox="0 0 48 48" aria-hidden>
            <defs>
              <linearGradient id="rank" x2="0" y2="1">
                <stop stopColor="#d9403e" />
                <stop offset="1" stopColor="#efa29c" />
              </linearGradient>
            </defs>
            <circle cx="24" cy="24" r="24" fill="url(#rank)" />
            <path d="M10 36V20H16V36ZM18 36V13Q18 12 20 12H29Q30 12 30 13V36ZM33 36V24H39V36Z" fill="#ffffff" />
            <path d="M22 21L25 19V28" fill="none" stroke="#d9605c" strokeWidth="2" />
          </svg>
          <span className="flex items-center gap-[14px] pb-1">
            人气榜
            <svg width="14" height="28" viewBox="0 0 14 28" fill="none" stroke="#aaaaaa" strokeWidth="3" aria-hidden>
              <path d="M2 3L11 14L2 25" />
            </svg>
          </span>
        </h2>
        <p className="relative mt-[12px] text-[36px] leading-[52px] text-[#666666]">
          A股市场排名第<strong className="text-[#d8461c]">543</strong>名
        </p>
      </section>
      <section className="relative h-[240px] overflow-hidden rounded-[24px] bg-gradient-to-b from-[#fff4f2] to-[#fffaf8] px-6 pt-[28px]">
        <svg viewBox="0 0 244 240" className="absolute top-0 right-0 h-[240px] w-[244px]" aria-hidden>
          <path d="M0 0H244V240H30Z" fill="#fdeeec" />
          <path d="M48 22H90L108 60L128 22H190Q235 22 238 60L244 80V240H70Z" fill="#fef5f3" />
          <path d="M68 42H96L100 130L136 42H166L112 200H80ZM230 56Q180 30 170 80Q172 108 200 122Q212 150 160 150L156 200Q236 190 234 130Q230 104 200 88Q196 72 218 82Z" fill="#fbe6e3" />
        </svg>
        <h2 className="relative flex items-center gap-[14px] text-[41px] leading-[50px] font-bold text-[#333333]">
          <svg width="48" height="48" viewBox="0 0 48 48" aria-hidden>
            <circle cx="24" cy="24" r="24" fill="url(#rank)" />
            <text x="23" y="34" fontSize="27" fontWeight="800" fontStyle="italic" fill="#ffffff" textAnchor="middle" fontFamily="'Open Sans', sans-serif">
              VS
            </text>
          </svg>
          <span className="pb-1">多空看盘</span>
        </h2>
        <div className="relative mr-[4px] ml-[10px] mt-[18px] grid h-[90px] grid-cols-2 gap-[5px] overflow-hidden rounded-full border-[5px] border-white bg-white text-[34px] leading-[52px]">
          <button type="button" className="flex items-start gap-[34px] bg-[#fbd5d0] pl-[18px] text-[#dc4a25]">
            <span className="mt-[10px] h-[56px] w-[56px] rounded-full bg-white" />
            看涨
          </button>
          <button type="button" className="flex items-start justify-end gap-[30px] bg-[#cfecdb] pr-[18px] text-[#48a96b]">
            看跌
            <span className="mt-[10px] h-[56px] w-[56px] rounded-full bg-white" />
          </button>
        </div>
      </section>
    </div>
  );
}

function BottomBar() {
  return (
    <footer className="flex h-[176px] shrink-0 items-start border-t border-[#d0d3d6] bg-[#f6f8fa] pr-[31px] pl-[40px]">
      <button type="button" className="flex w-[232px] flex-col items-center pt-[9px]">
        <svg width="20" height="8" viewBox="0 0 20 8" className="mr-[34px]" aria-hidden>
          <path d="M10 0L20 8H0Z" fill="#777777" />
        </svg>
        <span className="mt-[8px] mr-[34px] text-[39px] leading-[46px] text-[#0c940f]">3839.76</span>
        <span className="mt-[4px] flex w-full justify-between text-[35px] leading-[46px]">
          <span className="text-[#666666]">上证</span>
          <span className="text-[#0c940f]">-1.95%</span>
        </span>
      </button>
      <button type="button" className="mt-[18px] ml-[40px] h-[99px] w-[177px] rounded-[18px] bg-gradient-to-b from-[#f5504b] to-[#ec736d] pb-1 text-[43px] leading-none font-bold text-white">
        买
      </button>
      <button type="button" className="mt-[18px] ml-[12px] h-[99px] w-[176px] rounded-[18px] bg-gradient-to-b from-[#3a74f6] to-[#6f9bff] pb-1 text-[43px] leading-none font-bold text-white">
        卖
      </button>
      <div className="ml-[54px] flex flex-1 justify-between pt-[11px] text-[32px] text-[#666666]">
        <Action label="撤单">
          <span className="text-[53px] leading-none font-medium text-[#333333]">撤</span>
        </Action>
        <Action label="设自选">
          <svg width="54" height="60" viewBox="0 0 54 60" fill="none" stroke="#333333" strokeWidth="4" strokeLinejoin="round" aria-hidden>
            <path d="M24 3Q27 1 30 3L49 14Q52 16 52 19V41Q52 44 49 46L30 57Q27 59 24 57L5 46Q2 44 2 41V19Q2 16 5 14Z" />
            <circle cx="27" cy="30" r="9" />
          </svg>
        </Action>
        <Action label="更多">
          <svg width="48" height="10" viewBox="0 0 48 10" fill="#333333" aria-hidden>
            <circle cx="5" cy="5" r="4.500" />
            <circle cx="24" cy="5" r="4.500" />
            <circle cx="43" cy="5" r="4.500" />
          </svg>
        </Action>
      </div>
    </footer>
  );
}

function Action({ label, children }: { label: string; children: ReactNode }) {
  return (
    <button type="button" className="flex flex-col items-center">
      <span className="flex h-[62px] items-center">{children}</span>
      <span className="mt-[6px] leading-[40px]">{label}</span>
    </button>
  );
}

export default function App() {
  return (
    <div className="flex h-screen flex-col overflow-hidden bg-white font-['Noto_Sans_CJK_SC',sans-serif]">
      <StatusBar />
      <Header />
      <main className="min-h-0 flex-1 overflow-hidden">
        <Quote />
        <Notice />
        <ChartTabs />
        <div className="flex h-[63px] items-center border-b border-[#d9d9d9] pb-[5px] pl-[12px] text-[36px] whitespace-nowrap text-[#0c940f]">
          <span className="w-[205px] text-[#efb94f]">均价：14.53</span>
          <span className="mr-[21px]">最新：14.13</span>
          <span className="mr-[21px]">-1.18</span>
          <span>-7.71%</span>
        </div>
        <PriceChart />
        <MacdBar />
        <div className="relative">
          <MacdChart />
          <button type="button" aria-label="放大" className="absolute top-[12px] right-[24px] flex h-[69px] w-[69px] items-center justify-center rounded-full bg-[#fef0e9]">
            <svg width="34" height="34" viewBox="0 0 34 34" fill="none" stroke="#d9580f" strokeWidth="4" aria-hidden>
              <path d="M2 16V2H16M2 2L14 14M32 18V32H18M32 32L20 20" />
            </svg>
          </button>
        </div>
        <div className="mx-[12px] border-b-2 border-[#e2e2e2]">
          <div className="-mr-3 grid grid-cols-5 pb-1 pl-3 text-center text-[38px] leading-[54px] text-[#999999]">
            {DATES.map((d) => (
              <span key={d}>{d}</span>
            ))}
          </div>
        </div>
        <AskBanner />
        <InfoTabs />
        <CardRow />
      </main>
      <BottomBar />
    </div>
  );
}
